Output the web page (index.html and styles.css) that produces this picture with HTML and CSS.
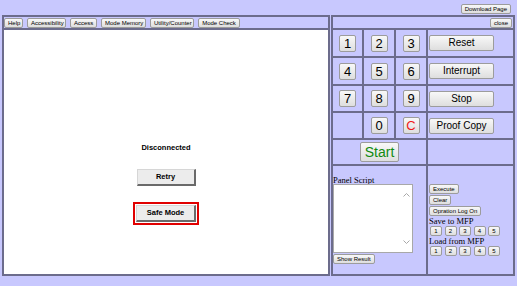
FILE: index.html
```html
<!DOCTYPE html>
<html>
<head>
    <meta charset="UTF-8">
    <title>Remote Operation Panel</title>
    <link rel="stylesheet" href="styles.css">
</head>
<body>
    <div class="topbar">
        <button class="btn small">Download Page</button>
    </div>
    <div class="main">
        <div class="left">
            <div class="toolbar">
                <button class="btn small tb-help">Help</button>
                <button class="btn small tb-acc">Accessibility</button>
                <button class="btn small tb-access">Access</button>
                <button class="btn small tb-mm">Mode Memory</button>
                <button class="btn small tb-uc">Utility/Counter</button>
                <button class="btn small tb-mc">Mode Check</button>
            </div>
            <div class="screen">
                <p class="state">Disconnected</p>
                <button class="btn classic">Retry</button>
                <div class="safe-box">
                    <button class="btn classic">Safe Mode</button>
                </div>
            </div>
        </div>

        <div class="right">
            <div class="cell head"><button class="btn small">close</button></div>

            <div class="cell key"><button class="btn digit">1</button></div>
            <div class="cell key"><button class="btn digit">2</button></div>
            <div class="cell key"><button class="btn digit">3</button></div>
            <div class="cell cmd-cell"><button class="btn cmd">Reset</button></div>

            <div class="cell key"><button class="btn digit">4</button></div>
            <div class="cell key"><button class="btn digit">5</button></div>
            <div class="cell key"><button class="btn digit">6</button></div>
            <div class="cell cmd-cell"><button class="btn cmd">Interrupt</button></div>

            <div class="cell key"><button class="btn digit">7</button></div>
            <div class="cell key"><button class="btn digit">8</button></div>
            <div class="cell key"><button class="btn digit">9</button></div>
            <div class="cell cmd-cell"><button class="btn cmd">Stop</button></div>

            <div class="cell key"></div>
            <div class="cell key"><button class="btn digit">0</button></div>
            <div class="cell key"><button class="btn digit clear">C</button></div>
            <div class="cell cmd-cell"><button class="btn cmd">Proof Copy</button></div>

            <div class="cell start-cell"><button class="btn start">Start</button></div>
            <div class="cell"></div>

            <div class="cell script-cell">
                <div class="label">Panel Script</div>
                <div class="script-box">
                    <textarea class="script-text"></textarea>
                    <svg class="chev chev-up" width="7" height="4" viewBox="0 0 7 4"><path d="M0.5 3.5 L3.5 0.5 L6.5 3.5" fill="none" stroke="#a8a8a8" stroke-width="1"/></svg>
                    <svg class="chev chev-down" width="7" height="4" viewBox="0 0 7 4"><path d="M0.5 0.5 L3.5 3.5 L6.5 0.5" fill="none" stroke="#a8a8a8" stroke-width="1"/></svg>
                </div>
                <button class="btn small">Show Result</button>
            </div>
            <div class="cell script-ops">
                <button class="btn small">Execute</button>
                <button class="btn small">Clear</button>
                <button class="btn small">Opration Log On</button>
                <div class="label">Save to MFP</div>
                <div class="slots">
                    <button class="btn small slot">1</button>
                    <button class="btn small slot">2</button>
                    <button class="btn small slot">3</button>
                    <button class="btn small slot">4</button>
                    <button class="btn small slot">5</button>
                </div>
                <div class="label">Load from MFP</div>
                <div class="slots">
                    <button class="btn small slot">1</button>
                    <button class="btn small slot">2</button>
                    <button class="btn small slot">3</button>
                    <button class="btn small slot">4</button>
                    <button class="btn small slot">5</button>
                </div>
            </div>
        </div>
    </div>
</body>
</html>
```

FILE: styles.css
```css
body {
    margin: 0;
    width: 517px;
    height: 286px;
    overflow: hidden;
    background-color: #c8c8fe;
    font-family: "Liberation Sans", Arial, sans-serif;
}

/* buttons */
.btn {
    font-family: "Liberation Sans", Arial, sans-serif;
    color: #000;
    background: linear-gradient(#f8f8f8, #dedede);
    border: 1px solid #9c9c9c;
    border-radius: 2px;
    margin: 0;
    padding: 0;
    line-height: 1;
    white-space: nowrap;
    box-sizing: border-box;
    cursor: pointer;
}
.small { font-size: 6px; height: 10px; padding: 0 3px; }

/* top strip */
.topbar {
    height: 15px;
    box-sizing: border-box;
    padding: 4px 6px 0 0;
    display: flex;
    justify-content: flex-end;
    align-items: flex-start;
}

.main {
    height: 261px;
    padding-left: 2px;
    display: grid;
    grid-template-columns: 328px 184px;
    column-gap: 1px;
}

/* left side: toolbar + device screen */
.left {
    border: 1px solid #6c6c8c;
    display: grid;
    grid-template-rows: 13px 1fr;
}
.toolbar {
    border: 1px solid #6c6c8c;
    display: flex;
    align-items: center;
    gap: 4px;
}
.tb-help { width: 19px; }
.tb-acc { width: 39px; }
.tb-access { width: 27px; }
.tb-mm { width: 45px; }
.tb-uc { width: 44px; }
.tb-mc { width: 42px; }

.screen {
    border: 1px solid #6c6c8c;
    background-color: #fff;
    display: flex;
    flex-direction: column;
    align-items: center;
    padding-top: 113px;
}
.state {
    margin: 0;
    font-size: 7.5px;
    font-weight: bold;
    line-height: 9px;
}
.classic {
    width: 59px;
    height: 17px;
    font-size: 7.5px;
    font-weight: bold;
    border-radius: 0;
    background: #ececec;
    border-style: solid;
    border-width: 1px 2px 2px 1px;
    border-color: #d6d6d6 #6a6a6a #6a6a6a #d6d6d6;
}
.screen > .classic { margin-top: 17px; }
.safe-box {
    margin-top: 16px;
    border: 2px solid #e00000;
    padding: 1px;
}
.safe-box .classic { width: 60px; height: 17px; display: block; }

/* right side: keypad */
.right {
    border: 1px solid #6c6c8c;
    display: grid;
    grid-template-columns: 31px 32px 32px 87px;
    grid-template-rows: 13px 28px 28px 27px 27px 26px 1fr;
}
.cell {
    border: 1px solid #6c6c8c;
    box-sizing: border-box;
    min-width: 0;
    min-height: 0;
}
.head {
    grid-column: 1 / -1;
    display: flex;
    justify-content: flex-end;
    align-items: center;
    padding-right: 1px;
}
.key {
    display: flex;
    justify-content: center;
    align-items: center;
}
.digit {
    width: 17px;
    height: 17px;
    font-size: 13px;
}
.clear { color: #f01818; }
.cmd-cell {
    display: flex;
    align-items: center;
    padding-left: 1px;
}
.cmd {
    width: 65px;
    height: 16px;
    font-size: 10px;
}
.start-cell {
    grid-column: 1 / 4;
    display: flex;
    justify-content: center;
    align-items: center;
}
.start {
    width: 39px;
    height: 20px;
    font-size: 14px;
    color: #108a10;
}

/* panel script */
.script-cell {
    grid-column: 1 / 4;
    display: flex;
    flex-direction: column;
    justify-content: center;
    align-items: flex-start;
}
.label {
    font-family: "Liberation Serif", "Times New Roman", serif;
    font-size: 8.5px;
    line-height: 8px;
}
.script-box {
    position: relative;
    width: 80px;
    height: 69px;
    margin-bottom: 1px;
}
.script-text {
    width: 100%;
    height: 100%;
    box-sizing: border-box;
    border: 1px solid #a8a8a8;
    resize: none;
    overflow: hidden;
    margin: 0;
    display: block;
}
.chev { position: absolute; right: 3px; }
.chev-up { top: 9px; }
.chev-down { bottom: 9px; }

.script-ops {
    display: flex;
    flex-direction: column;
    justify-content: center;
    align-items: flex-start;
    gap: 1px;
    padding-left: 1px;
}
.slots {
    display: flex;
    gap: 2.5px;
    padding-left: 1px;
}
.slot { width: 12px; padding: 0; }
```
